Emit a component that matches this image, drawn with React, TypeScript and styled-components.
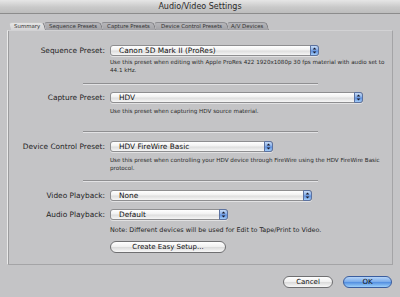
import React from 'react'
import styled, { createGlobalStyle } from 'styled-components'

// Audio/Video Settings dialog

const GlobalStyle = createGlobalStyle`
    html, body {
        margin: 0;
        padding: 0;
        background: #c4c4c6;
    }
    body {
        font-family: "DejaVu Sans", "Liberation Sans", sans-serif;
        color: #1e1e1e;
    }
`

const Window = styled.div`
    width: 400px;
    height: 297px;
    background: #c4c4c6;
    overflow: hidden;
    display: flex;
    flex-direction: column;
`

const TitleBar = styled.div`
    height: 13px;
    flex-shrink: 0;
    background: linear-gradient(#e6e6e6, #c9c9c9 55%, #bdbdbd);
    border-bottom: 1px solid #8c8c8c;
    display: flex;
    align-items: center;
    justify-content: center;
    font-size: 8px;
    color: #2a2a2a;
`

const Body = styled.div`
    padding: 8px 7px 0 7px;
    display: flex;
    flex-direction: column;
`

const TabRow = styled.div`
    display: flex;
    height: 8px;
    padding-left: 3px;
    align-items: flex-end;
`

const Tab = styled.div<{ $active?: boolean; $w: number }>`
    width: ${p => p.$w}px;
    height: 8px;
    box-sizing: border-box;
    text-align: center;
    font-size: 5.4px;
    line-height: 7px;
    color: #333;
    background: ${p => (p.$active ? 'linear-gradient(#e4e4e4, #d4d4d6)' : 'linear-gradient(#b6b6ba, #a2a2a6)')};
    border-top: 1px solid ${p => (p.$active ? '#c8c8c8' : '#8e8e92')};
    border-right: 1px solid #77777b;
    border-radius: 3px 4px 0 0;
    transform: skewX(14deg);
    & > span {
        display: inline-block;
        transform: skewX(-14deg);
    }
`

const Panel = styled.div`
    height: 235px;
    box-sizing: border-box;
    border: 1px solid #a4a4a6;
    border-top-color: #d2d2d4;
    border-left-color: #eaeaea;
    box-shadow: inset 1px 0 0 #9c9c9e;
    display: flex;
    flex-direction: column;
    padding-top: 14px;
`

const Row = styled.div<{ $top?: number }>`
    display: flex;
    align-items: center;
    margin-top: ${p => p.$top ?? 0}px;
    height: 11px;
`

const Label = styled.div`
    width: 97px;
    text-align: right;
    font-size: 7.4px;
    padding-right: 5px;
    flex-shrink: 0;
    color: #1e1e1e;
`

const Popup = styled.div<{ $w: number }>`
    position: relative;
    width: ${p => p.$w}px;
    height: 11px;
    box-sizing: border-box;
    border: 1px solid #8e8e90;
    border-radius: 3px;
    background: linear-gradient(#ffffff, #f1f1f1 45%, #dedede 55%, #f6f6f6);
    font-size: 7.4px;
    line-height: 9px;
    padding-left: 8px;
    color: #111;
    box-shadow: 0 1px 0 rgba(255, 255, 255, 0.5);
`

const Stepper = styled.div`
    position: absolute;
    right: -1px;
    top: -1px;
    bottom: -1px;
    width: 9px;
    border-radius: 0 3px 3px 0;
    border: 1px solid #5c72a0;
    box-sizing: border-box;
    background: linear-gradient(#c8dcf6, #86aee8 45%, #5e8fde 55%, #a4cdf8);
    display: flex;
    align-items: center;
    justify-content: center;
`

const Desc = styled.div<{ $top?: number }>`
    margin-left: 102px;
    margin-top: ${p => p.$top ?? 0}px;
    font-size: 5.6px;
    line-height: 8px;
    color: #2a2a2a;
    width: 276px;
`

const Separator = styled.div<{ $top: number }>`
    margin-left: 75px;
    width: 235px;
    height: 1px;
    background: #8f8f91;
    border-bottom: 1px solid #e2e2e4;
    margin-top: ${p => p.$top}px;
`

const Note = styled.div`
    margin-left: 102px;
    margin-top: 6px;
    font-size: 6.4px;
    line-height: 8px;
    color: #1e1e1e;
`

const PillButton = styled.div<{ $w: number; $blue?: boolean }>`
    width: ${p => p.$w}px;
    height: 12px;
    box-sizing: border-box;
    border: 1px solid ${p => (p.$blue ? '#3a5d9e' : '#6f6f71')};
    border-radius: 6px;
    background: ${p =>
        p.$blue
            ? 'linear-gradient(#b6d4f8, #7eaeea 45%, #5792e2 55%, #9cd0fa)'
            : 'linear-gradient(#ffffff, #f0f0f0 45%, #dcdcdc 55%, #f8f8f8)'};
    display: flex;
    align-items: center;
    justify-content: center;
    font-size: 7px;
    color: #111;
`

const SetupRow = styled.div`
    margin-left: 102px;
    margin-top: 7px;
`

const Footer = styled.div`
    display: flex;
    justify-content: flex-end;
    gap: 10px;
    padding: 11px 1px 0 0;
`

const Arrows = () => (
    <svg width="5" height="7" viewBox="0 0 5 7">
        <path d="M2.5 0.6 L4.3 2.6 L0.7 2.6 Z" fill="#1a1a2a" />
        <path d="M2.5 6.4 L4.3 4.4 L0.7 4.4 Z" fill="#1a1a2a" />
    </svg>
)

const Select = ({ value, width }: { value: string; width: number }) => (
    <Popup $w={width}>
        {value}
        <Stepper>
            <Arrows />
        </Stepper>
    </Popup>
)

const tabs = [
    { name: 'Summary', w: 35 },
    { name: 'Sequence Presets', w: 57 },
    { name: 'Capture Presets', w: 53 },
    { name: 'Device Control Presets', w: 73 },
    { name: 'A/V Devices', w: 40 },
]

export default function App() {
    return (
        <>
            <GlobalStyle />
            <Window>
                <TitleBar>Audio/Video Settings</TitleBar>
                <Body>
                    <TabRow>
                        {tabs.map((t, i) => (
                            <Tab key={t.name} $w={t.w} $active={i === 0}>
                                <span>{t.name}</span>
                            </Tab>
                        ))}
                    </TabRow>
                    <Panel>
                        <Row>
                            <Label>Sequence Preset:</Label>
                            <Select value="Canon 5D Mark II (ProRes)" width={209} />
                        </Row>
                        <Desc $top={2}>
                            Use this preset when editing with Apple ProRes 422 1920x1080p 30 fps material with audio set to 44.1 kHz.
                        </Desc>
                        <Separator $top={9} />
                        <Row $top={7}>
                            <Label>Capture Preset:</Label>
                            <Select value="HDV" width={253} />
                        </Row>
                        <Desc $top={4}>Use this preset when capturing HDV source material.</Desc>
                        <Separator $top={16} />
                        <Row $top={8}>
                            <Label>Device Control Preset:</Label>
                            <Select value="HDV FireWire Basic" width={163} />
                        </Row>
                        <Desc $top={4}>
                            Use this preset when controlling your HDV device through FireWire using the HDV FireWire Basic protocol.
                        </Desc>
                        <Separator $top={8} />
                        <Row $top={8}>
                            <Label>Video Playback:</Label>
                            <Select value="None" width={202} />
                        </Row>
                        <Row $top={8}>
                            <Label>Audio Playback:</Label>
                            <Select value="Default" width={118} />
                        </Row>
                        <Note>Note: Different devices will be used for Edit to Tape/Print to Video.</Note>
                        <SetupRow>
                            <PillButton $w={116}>Create Easy Setup...</PillButton>
                        </SetupRow>
                    </Panel>
                    <Footer>
                        <PillButton $w={50}>Cancel</PillButton>
                        <PillButton $w={49} $blue>
                            OK
                        </PillButton>
                    </Footer>
                </Body>
            </Window>
        </>
    )
}
